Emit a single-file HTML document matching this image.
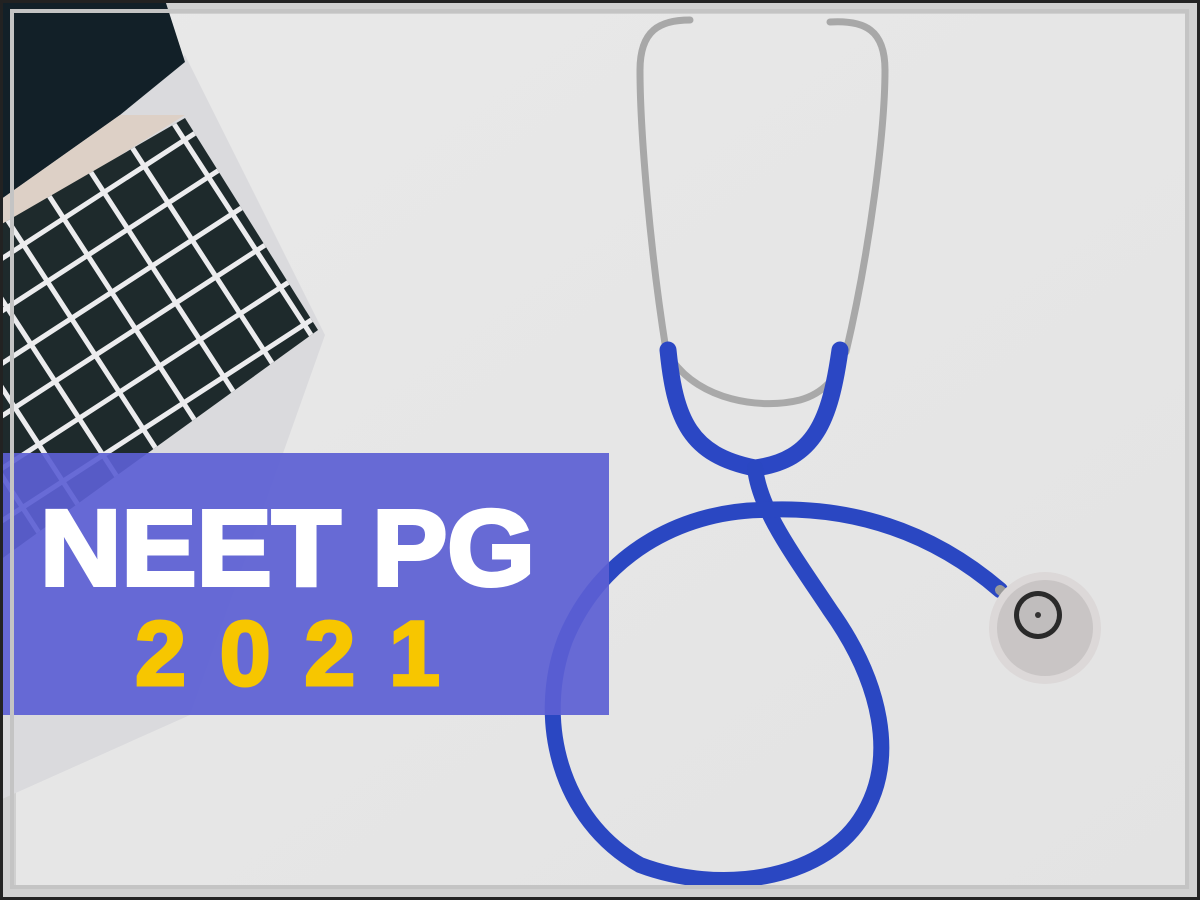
<!DOCTYPE html>
<html><head><meta charset="utf-8"><style>
html,body{margin:0;padding:0;width:1200px;height:900px;overflow:hidden;background:#111;}
svg{display:block}
</style></head><body>
<svg width="1200" height="900" viewBox="0 0 1200 900" xmlns="http://www.w3.org/2000/svg">
<defs>
<linearGradient id="bg" x1="0" y1="0" x2="1" y2="1">
<stop offset="0" stop-color="#e9e9e9"/><stop offset="1" stop-color="#e3e3e3"/>
</linearGradient>
<clipPath id="kb"><polygon points="0,225 185,118 318,330 0,560"/></clipPath>
</defs>
<rect x="3" y="3" width="1194" height="894" fill="#d0d0d0"/>
<rect x="16" y="14" width="1170" height="872" fill="url(#bg)"/>
<!-- laptop -->
<polygon points="0,180 185,55 325,335 190,715 0,800" fill="#dadadd"/>
<polygon points="0,0 165,0 185,62 120,115 0,200" fill="#122028"/>
<polygon points="0,200 120,115 185,115 0,230" fill="#ddd0c6"/>
<g clip-path="url(#kb)">
<rect x="0" y="100" width="330" height="470" fill="#1e2a2c"/>
<g transform="rotate(-33 160 330)" stroke="#ececee" stroke-width="5" fill="none">
<path d="M-200 140H500M-200 184H500M-200 228H500M-200 272H500M-200 316H500M-200 360H500M-200 404H500M-200 448H500M-200 492H500M-200 536H500"/>
<path d="M-100 0V700M-52 0V700M-4 0V700M44 0V700M92 0V700M140 0V700M188 0V700M236 0V700M284 0V700M332 0V700M380 0V700"/>
</g>
</g>
<!-- stethoscope silver -->
<g fill="none" stroke-linecap="round">
<path d="M666 350 C650 250 640 130 640 70 C640 30 660 20 690 20" stroke="#a8a8a8" stroke-width="7"/>
<path d="M846 352 C870 250 885 130 885 70 C885 30 865 20 830 22" stroke="#a8a8a8" stroke-width="7"/>
<path d="M672 360 C700 400 760 410 800 400 C825 393 838 375 842 360" stroke="#a9a9a9" stroke-width="7"/>
<path d="M668 350 C675 420 690 455 755 468 C815 460 830 420 840 350" stroke="#2b47c4" stroke-width="17"/>
<path d="M760 510 C680 512 600 555 565 640 C535 720 560 820 640 865 C720 895 820 880 860 820 C900 760 880 680 830 610 C790 550 760 510 755 468" stroke="#2a47c2" stroke-width="16"/>
<path d="M760 510 C850 505 930 530 1000 590" stroke="#2a47c2" stroke-width="16"/>
<path d="M1000 590 L1025 610" stroke="#9a9a9a" stroke-width="10"/>
</g>
<circle cx="1045" cy="628" r="56" fill="#dcd8d8"/>
<circle cx="1045" cy="628" r="48" fill="#c9c5c5"/>
<circle cx="1038" cy="615" r="24" fill="#2a2a2a"/>
<circle cx="1038" cy="615" r="19" fill="#c0bdbd"/>
<circle cx="1038" cy="615" r="3" fill="#333"/>
<!-- banner -->
<rect x="0" y="453" width="609" height="262" fill="#5c60d4" opacity="0.92"/>
<text x="40" y="585" font-family="Liberation Sans, sans-serif" font-weight="bold" font-size="108" fill="#fff" stroke="#fff" stroke-width="4" textLength="495" lengthAdjust="spacingAndGlyphs">NEET PG</text>
<text x="135" y="685" font-family="Liberation Sans, sans-serif" font-weight="bold" font-size="92" fill="#f7c600" stroke="#f7c600" stroke-width="3" textLength="305" lengthAdjust="spacing">2021</text>
<!-- frame -->
<rect x="12" y="11" width="1175" height="876" fill="none" stroke="#c4c4c4" stroke-width="4"/>
<rect x="1.5" y="1.5" width="1197" height="897" fill="none" stroke="#222" stroke-width="3"/>
</svg>
</body></html>
